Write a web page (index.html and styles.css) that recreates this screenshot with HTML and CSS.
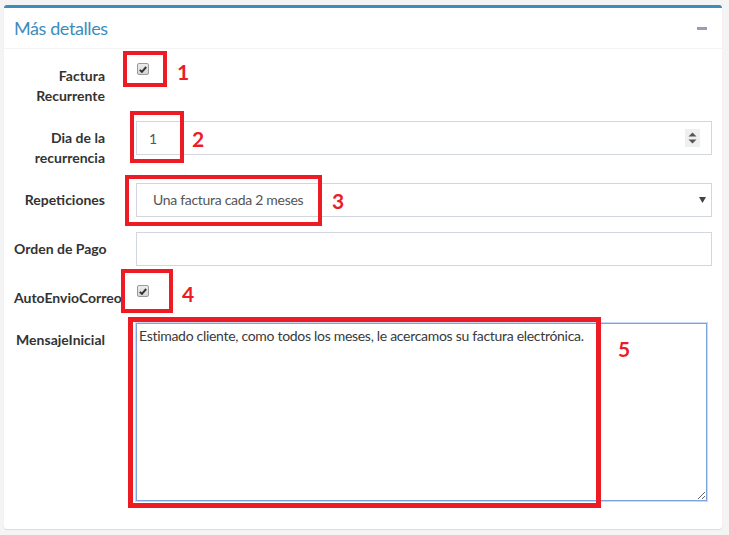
FILE: index.html
```html
<!DOCTYPE html>
<html lang="es">
<head>
    <meta charset="UTF-8">
    <meta name="viewport" content="width=device-width, initial-scale=1.0">
    <title>Más detalles</title>
    <link rel="stylesheet" href="styles.css">
</head>
<body>
    <div class="box">
        <div class="box-header">
            <h3 class="box-title">Más detalles</h3>
            <button class="btn-box-tool" type="button" title="Contraer">
                <svg width="10" height="3" viewBox="0 0 10 3"><rect width="10" height="3" fill="#97a0b3"/></svg>
            </button>
        </div>

        <form class="box-body">
            <div class="form-group">
                <label class="control-label">Factura<br>Recurrente</label>
                <div class="field">
                    <span class="check">
                        <svg width="8" height="7" viewBox="0 0 8 7"><path d="M0.8 3.8 L2.9 5.9 L7.2 1" fill="none" stroke="#333" stroke-width="1.9"/></svg>
                    </span>
                </div>
            </div>

            <div class="form-group">
                <label class="control-label">Dia de la<br>recurrencia</label>
                <div class="field">
                    <input class="form-control" type="text" value="1">
                    <span class="spinner">
                        <svg width="15" height="18" viewBox="0 0 15 18"><path d="M3.5 7.5 L7.5 3.5 L11.5 7.5 Z M3.5 10.5 L11.5 10.5 L7.5 14.5 Z" fill="#555"/></svg>
                    </span>
                </div>
            </div>

            <div class="form-group">
                <label class="control-label">Repeticiones</label>
                <div class="field">
                    <select class="form-control select">
                        <option>Una factura cada 2 meses</option>
                    </select>
                    <span class="arrow">
                        <svg width="7" height="6" viewBox="0 0 7 6"><path d="M0 0 L7 0 L3.5 6 Z" fill="#444"/></svg>
                    </span>
                </div>
            </div>

            <div class="form-group">
                <label class="control-label">Orden de Pago</label>
                <div class="field">
                    <input class="form-control" type="text" value="">
                </div>
            </div>

            <div class="form-group">
                <label class="control-label">AutoEnvioCorreo</label>
                <div class="field">
                    <span class="check">
                        <svg width="8" height="7" viewBox="0 0 8 7"><path d="M0.8 3.8 L2.9 5.9 L7.2 1" fill="none" stroke="#333" stroke-width="1.9"/></svg>
                    </span>
                </div>
            </div>

            <div class="form-group">
                <label class="control-label">MensajeInicial</label>
                <div class="field">
                    <textarea class="form-control message">Estimado cliente, como todos los meses, le acercamos su factura electrónica.</textarea>
                </div>
            </div>
        </form>
    </div>

    <!-- numbered callouts drawn over the form -->
    <div class="mark-box mark-box-1"></div>
    <div class="mark-box mark-box-2"></div>
    <div class="mark-box mark-box-3"></div>
    <div class="mark-box mark-box-4"></div>
    <div class="mark-box mark-box-5"></div>
    <span class="mark-num mark-num-1">1</span>
    <span class="mark-num mark-num-2">2</span>
    <span class="mark-num mark-num-3">3</span>
    <span class="mark-num mark-num-4">4</span>
    <span class="mark-num mark-num-5">5</span>
</body>
</html>
```

FILE: styles.css
```css
:root {
    --primary-color: #3c8dbc;
    --text-primary: #333;
    --text-input: #555;
    --border-input: #d2d6de;
    --background-page: #f4f4f4;
    --mark-red: #ed1c24;
}

* {
    box-sizing: border-box;
}

html,
body {
    height: 100%;
}

body {
    margin: 0;
    padding: 5px 7px 5px 4px;
    font-family: Lato, 'Open Sans', sans-serif;
    font-size: 14px;
    line-height: 20px;
    color: var(--text-primary);
    background-color: var(--background-page);
    overflow: hidden;
}

.box {
    background-color: #fff;
    border-top: 3px solid var(--primary-color);
    border-radius: 3px;
    box-shadow: 0 1px 1px rgba(0,0,0,0.1);
}

.box-header {
    display: flex;
    align-items: center;
    justify-content: space-between;
    padding: 10px;
    border-bottom: 1px solid var(--background-page);
}

.box-title {
    margin: 0;
    font-size: 18px;
    line-height: 20px;
    font-weight: 400;
    letter-spacing: -0.4px;
    color: var(--primary-color);
}

.btn-box-tool {
    display: flex;
    margin-right: 5px;
    padding: 0;
    border: none;
    background: none;
}

.box-body {
    display: flex;
    flex-direction: column;
    gap: 15px;
    padding: 10px 10px 28px;
}

.form-group {
    display: grid;
    grid-template-columns: 91px 1fr;
    column-gap: 31px;
    align-items: start;
}

.control-label {
    padding-top: 7px;
    text-align: right;
    font-weight: 700;
    white-space: nowrap;
}

.field {
    position: relative;
}

.check {
    display: flex;
    align-items: center;
    justify-content: center;
    width: 12px;
    height: 12px;
    margin: 4px 0 0 1px;
    border: 1px solid #9a9a9a;
    border-radius: 2px;
    background: linear-gradient(#ececec, #d6d6d6);
}

.form-control {
    display: block;
    width: 100%;
    height: 34px;
    padding: 6px 12px;
    border: 1px solid var(--border-input);
    border-radius: 0;
    background-color: #fff;
    font: inherit;
    letter-spacing: -0.3px;
    color: var(--text-input);
    outline: none;
}

.select {
    appearance: none;
    -webkit-appearance: none;
    padding-left: 16px;
}

.spinner {
    position: absolute;
    top: 8px;
    right: 12px;
    display: flex;
    background-color: #efefef;
}

.arrow {
    position: absolute;
    top: 14px;
    right: 6px;
    display: flex;
}

.message {
    width: calc(100% - 5px);
    height: 178px;
    padding: 2px;
    color: #3a3a3a;
    border-color: #7ca3de;
    box-shadow: 0 0 0 1px #c8d9f3;
    resize: both;
}

/* callouts */
.mark-box {
    position: absolute;
    border: 4px solid var(--mark-red);
}

.mark-box-1 { left: 123px; top: 51px; width: 44px; height: 36px; }
.mark-box-2 { left: 130px; top: 111px; width: 54px; height: 52px; }
.mark-box-3 { left: 125px; top: 175px; width: 197px; height: 51px; }
.mark-box-4 { left: 121px; top: 269px; width: 52px; height: 44px; }
.mark-box-5 { left: 128px; top: 317px; width: 473px; height: 191px; border-width: 5px; }

.mark-num {
    position: absolute;
    font-family: Lato, sans-serif;
    font-size: 21px;
    line-height: 1;
    font-weight: 700;
    color: var(--mark-red);
}

.mark-num-1 { left: 177px; top: 61px; }
.mark-num-2 { left: 192px; top: 128px; }
.mark-num-3 { left: 332px; top: 190px; }
.mark-num-4 { left: 182px; top: 283px; }
.mark-num-5 { left: 618px; top: 338px; }
```
